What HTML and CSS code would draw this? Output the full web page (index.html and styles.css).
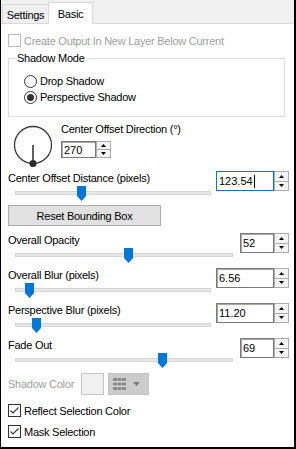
FILE: index.html
```html
<!DOCTYPE html>
<html>
<head>
<meta charset="utf-8">
<link rel="stylesheet" href="styles.css">
</head>
<body>
<div class="window">
  <div class="tabs">
    <div class="tab tab-settings">Settings</div>
    <div class="tab tab-active">Basic</div>
  </div>
  <div class="pane">
    <div class="check disabled">
      <span class="box"></span>Create Output In New Layer Below Current
    </div>

    <fieldset class="group">
      <legend>Shadow Mode</legend>
      <div class="radios">
        <div class="radio"><span class="radio-c"></span>Drop Shadow</div>
        <div class="radio"><span class="radio-c on"><span class="dot"></span></span>Perspective Shadow</div>
      </div>
    </fieldset>

    <div class="dir">
      <svg class="dial" width="40" height="44" viewBox="0 0 40 44">
        <circle cx="20" cy="21" r="18.5" fill="none" stroke="#3a3a3a" stroke-width="1.3"/>
        <line x1="20" y1="21" x2="20" y2="39" stroke="#3a3a3a" stroke-width="1.6"/>
        <circle cx="20" cy="39.5" r="3.6" fill="#2e2e2e"/>
      </svg>
      <div class="dir-right">
        <div class="lbl">Center Offset Direction (°)</div>
        <div class="spin spin-small">
          <div class="spin-box">270</div>
          <div class="spin-btns">
            <div class="sb"><svg width="5" height="3" viewBox="0 0 5 3"><path d="M2.5 0L5 3H0Z" fill="#000"/></svg></div>
            <div class="sb sb-down"><svg width="5" height="3" viewBox="0 0 5 3"><path d="M0 0H5L2.5 3Z" fill="#000"/></svg></div>
          </div>
        </div>
      </div>
    </div>

    <div class="sl sl-first">
      <div class="sl-left">
        <div class="lbl">Center Offset Distance (pixels)</div>
        <div class="track-wrap short">
          <div class="track"></div>
          <svg class="thumb" style="left:62px" width="9" height="15" viewBox="0 0 9 15"><path d="M0 0H9V10L4.5 15L0 10Z" fill="#0078d7"/></svg>
        </div>
      </div>
      <div class="spin">
        <div class="spin-box focus">123.54<span class="caret"></span></div>
        <div class="spin-btns">
          <div class="sb"><svg width="5" height="3" viewBox="0 0 5 3"><path d="M2.5 0L5 3H0Z" fill="#000"/></svg></div>
          <div class="sb sb-down"><svg width="5" height="3" viewBox="0 0 5 3"><path d="M0 0H5L2.5 3Z" fill="#000"/></svg></div>
        </div>
      </div>
    </div>

    <button class="reset">Reset Bounding Box</button>

    <div class="sl sl-after-btn">
      <div class="sl-left">
        <div class="lbl">Overall Opacity</div>
        <div class="track-wrap long">
          <div class="track"></div>
          <svg class="thumb" style="left:109px" width="9" height="15" viewBox="0 0 9 15"><path d="M0 0H9V10L4.5 15L0 10Z" fill="#0078d7"/></svg>
        </div>
      </div>
      <div class="spin">
        <div class="spin-box narrow">52</div>
        <div class="spin-btns">
          <div class="sb"><svg width="5" height="3" viewBox="0 0 5 3"><path d="M2.5 0L5 3H0Z" fill="#000"/></svg></div>
          <div class="sb sb-down"><svg width="5" height="3" viewBox="0 0 5 3"><path d="M0 0H5L2.5 3Z" fill="#000"/></svg></div>
        </div>
      </div>
    </div>

    <div class="sl">
      <div class="sl-left">
        <div class="lbl">Overall Blur (pixels)</div>
        <div class="track-wrap short">
          <div class="track"></div>
          <svg class="thumb" style="left:10px" width="9" height="15" viewBox="0 0 9 15"><path d="M0 0H9V10L4.5 15L0 10Z" fill="#0078d7"/></svg>
        </div>
      </div>
      <div class="spin">
        <div class="spin-box">6.56</div>
        <div class="spin-btns">
          <div class="sb"><svg width="5" height="3" viewBox="0 0 5 3"><path d="M2.5 0L5 3H0Z" fill="#000"/></svg></div>
          <div class="sb sb-down"><svg width="5" height="3" viewBox="0 0 5 3"><path d="M0 0H5L2.5 3Z" fill="#000"/></svg></div>
        </div>
      </div>
    </div>

    <div class="sl">
      <div class="sl-left">
        <div class="lbl">Perspective Blur (pixels)</div>
        <div class="track-wrap short">
          <div class="track"></div>
          <svg class="thumb" style="left:17px" width="9" height="15" viewBox="0 0 9 15"><path d="M0 0H9V10L4.5 15L0 10Z" fill="#0078d7"/></svg>
        </div>
      </div>
      <div class="spin">
        <div class="spin-box">11.20</div>
        <div class="spin-btns">
          <div class="sb"><svg width="5" height="3" viewBox="0 0 5 3"><path d="M2.5 0L5 3H0Z" fill="#000"/></svg></div>
          <div class="sb sb-down"><svg width="5" height="3" viewBox="0 0 5 3"><path d="M0 0H5L2.5 3Z" fill="#000"/></svg></div>
        </div>
      </div>
    </div>

    <div class="sl">
      <div class="sl-left">
        <div class="lbl">Fade Out</div>
        <div class="track-wrap long">
          <div class="track"></div>
          <svg class="thumb" style="left:143px" width="9" height="15" viewBox="0 0 9 15"><path d="M0 0H9V10L4.5 15L0 10Z" fill="#0078d7"/></svg>
        </div>
      </div>
      <div class="spin">
        <div class="spin-box narrow">69</div>
        <div class="spin-btns">
          <div class="sb"><svg width="5" height="3" viewBox="0 0 5 3"><path d="M2.5 0L5 3H0Z" fill="#000"/></svg></div>
          <div class="sb sb-down"><svg width="5" height="3" viewBox="0 0 5 3"><path d="M0 0H5L2.5 3Z" fill="#000"/></svg></div>
        </div>
      </div>
    </div>

    <div class="color-row">
      <span class="color-lbl">Shadow Color</span>
      <span class="swatch"></span>
      <span class="dd">
        <svg width="13" height="12" viewBox="0 0 13 12">
          <rect x="0" y="0" width="13" height="12" fill="#d6d6d6"/>
          <rect x="0" y="0" width="4" height="3" fill="#8a8a8a"/>
          <rect x="4.5" y="0" width="4" height="3" fill="#8a8a8a"/>
          <rect x="9" y="0" width="4" height="3" fill="#8a8a8a"/>
          <rect x="0" y="4.5" width="4" height="3" fill="#8a8a8a"/>
          <rect x="4.5" y="4.5" width="4" height="3" fill="#8a8a8a"/>
          <rect x="9" y="4.5" width="4" height="3" fill="#8a8a8a"/>
          <rect x="0" y="9" width="4" height="3" fill="#8a8a8a"/>
          <rect x="4.5" y="9" width="4" height="3" fill="#8a8a8a"/>
          <rect x="9" y="9" width="4" height="3" fill="#8a8a8a"/>
        </svg>
        <svg class="dd-arrow" width="7" height="4" viewBox="0 0 7 4"><path d="M0 0H7L3.5 4Z" fill="#7a7a7a"/></svg>
      </span>
    </div>

    <div class="check checked reflect">
      <span class="box"><svg width="11" height="11" viewBox="0 0 11 11"><path d="M1.5 5.5L4 8L9.5 2.5" fill="none" stroke="#333" stroke-width="1.1"/></svg></span>Reflect Selection Color
    </div>
    <div class="check checked mask">
      <span class="box"><svg width="11" height="11" viewBox="0 0 11 11"><path d="M1.5 5.5L4 8L9.5 2.5" fill="none" stroke="#333" stroke-width="1.1"/></svg></span>Mask Selection
    </div>
  </div>
</div>
</body>
</html>
```

FILE: styles.css
```css
* { box-sizing: border-box; }
html, body { margin: 0; padding: 0; }
body {
  width: 296px;
  height: 449px;
  overflow: hidden;
  background: #fff;
  font-family: "Liberation Sans", Arial, sans-serif;
  font-size: 11px;
  letter-spacing: -0.25px;
  line-height: 14px;
  color: #000;
}
.window {
  width: 296px;
  height: 449px;
  border-left: 1px solid #000;
  border-right: 2px solid #000;
  border-bottom: 2px solid #000;
  display: flex;
  flex-direction: column;
  background: #fff;
}
.tabs {
  height: 24px;
  flex: none;
  background: #f0f0f0;
  border-bottom: 1px solid #d9d9d9;
  display: flex;
  align-items: flex-end;
  padding-left: 1px;
}
.tab {
  display: flex;
  align-items: center;
  justify-content: center;
}
.tab-settings {
  width: 46px;
  height: 19px;
  padding-top: 1px;
  border: 1px solid #d9d9d9;
  border-bottom: none;
  border-right: none;
}
.tab-active {
  width: 45px;
  height: 22px;
  margin-bottom: -1px;
  background: #fff;
  border: 1px solid #d9d9d9;
  border-bottom: none;
}
.pane {
  flex: 1;
  padding: 10px 0 0 7px;
  display: flex;
  flex-direction: column;
  align-items: flex-start;
}
.check {
  display: flex;
  align-items: center;
  height: 13px;
}
.box {
  width: 13px;
  height: 13px;
  border: 1px solid #333;
  background: #fff;
  margin-right: 3px;
  display: flex;
  align-items: center;
  justify-content: center;
  flex: none;
}
.disabled { color: #a0a0a0; }
.disabled .box { border-color: #bcbcbc; }
.reflect { margin-top: 9px; }
.mask { margin-top: 8px; }

.group {
  margin: 4px 0 0 0;
  padding: 0 0 11px 15px;
  width: 277px;
  border: 1px solid #dcdcdc;
  min-width: 0;
}
.group legend {
  margin-left: -9px;
  padding: 0 2px;
  line-height: 14px;
}
.radios { padding-top: 8px; }
.radio {
  display: flex;
  align-items: center;
  height: 16px;
}
.radio-c {
  width: 13px;
  height: 13px;
  border-radius: 50%;
  border: 1px solid #333;
  margin-right: 3px;
  display: flex;
  align-items: center;
  justify-content: center;
  background: #fff;
}
.dot {
  width: 7px;
  height: 7px;
  border-radius: 50%;
  background: #333;
}

.dir {
  display: flex;
  align-items: flex-start;
  margin-top: 5px;
}
.dial {
  display: block;
  margin: 2px 0 0 5px;
}
.dir-right {
  margin-left: 8px;
  display: flex;
  flex-direction: column;
  align-items: flex-start;
}
.spin {
  display: flex;
  height: 20px;
  flex: none;
}
.spin-small {
  height: 17px;
  margin-top: 5px;
}
.spin-box {
  width: 58px;
  height: 100%;
  border: 1px solid #7a7a7a;
  box-shadow: inset 1px 1px 0 #a8a8a8;
  background: #fff;
  padding-left: 2px;
  display: flex;
  align-items: center;
  letter-spacing: 0;
}
.spin-small .spin-box { width: 35px; }
.spin-box.narrow { width: 34px; }
.spin-box.focus {
  border-color: #0078d7;
  box-shadow: none;
}
.caret {
  display: inline-block;
  width: 1px;
  height: 13px;
  background: #000;
  margin-left: 1px;
}
.spin-btns {
  width: 15px;
  height: 100%;
  display: flex;
  flex-direction: column;
  border: 1px solid #adadad;
}
.sb {
  flex: 1;
  display: flex;
  align-items: center;
  justify-content: center;
  background: #f4f4f4;
}
.sb svg { display: block; }
.sb-down { border-top: 1px solid #adadad; }

.sl {
  display: flex;
  align-items: flex-start;
  width: 281px;
  margin-top: 4px;
}
.sl-first { margin-top: 3px; }
.sl-after-btn { margin-top: 7px; }
.sl-left {
  display: flex;
  flex-direction: column;
  align-items: flex-start;
}
.spin { margin-left: auto; }
.spin-small { margin-left: 0; }
.track-wrap {
  position: relative;
  height: 16px;
  margin-top: 1px;
  margin-left: 7px;
}
.track-wrap.short { width: 196px; }
.track-wrap.long { width: 218px; }
.track {
  margin-top: 5px;
  height: 4px;
  background: #e7e7e7;
  border: 1px solid #d6d6d6;
}
.thumb {
  position: absolute;
  top: 0;
  display: block;
}

.reset {
  margin-top: 3px;
  width: 153px;
  height: 21px;
  padding: 0;
  background: #e1e1e1;
  border: 1px solid #adadad;
  border-radius: 0;
  font-family: inherit;
  font-size: 11px;
  letter-spacing: -0.25px;
  color: #000;
}

.color-row {
  display: flex;
  align-items: center;
  margin-top: 4px;
  height: 22px;
}
.color-lbl {
  width: 73px;
  color: #a0a0a0;
}
.swatch {
  width: 23px;
  height: 22px;
  border: 1px solid #c6c6c6;
  background: #f0f0f0;
}
.dd {
  margin-left: 4px;
  width: 41px;
  height: 22px;
  background: #cccccc;
  border: 1px solid #c4c4c4;
  display: flex;
  align-items: center;
  padding-left: 4px;
}
.dd svg { display: block; }
.dd-arrow { margin-left: 7px; }
```
